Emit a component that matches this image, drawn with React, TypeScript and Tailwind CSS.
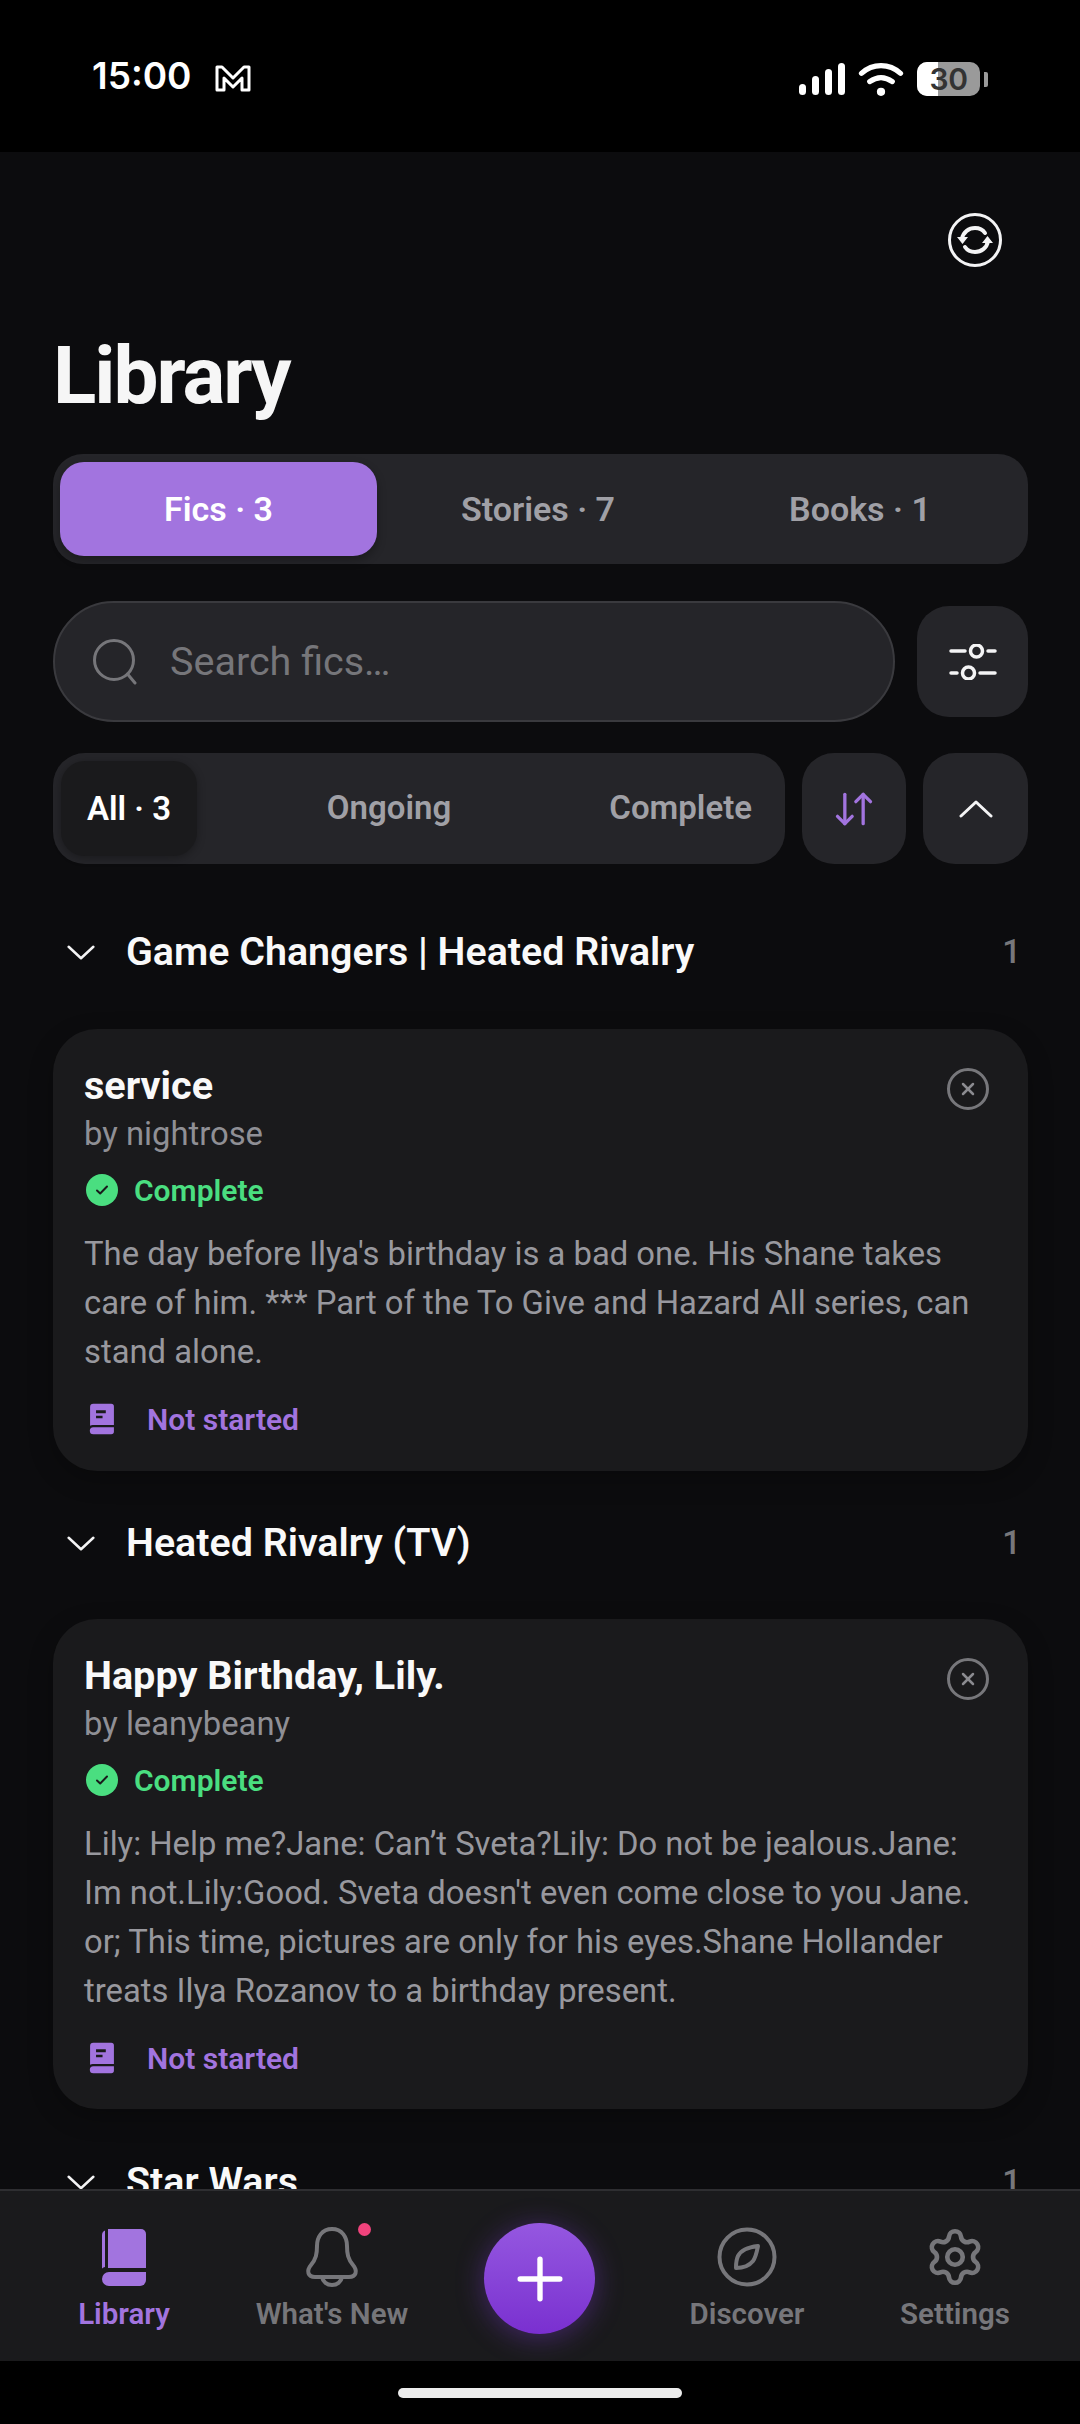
import { ArrowDownUp, Plus, Settings, X } from "lucide-react";

function BookFilled({ className }: { className: string }) {
  return (
    <svg viewBox="0 0 24 28" className={className} fill="currentColor">
      <path d="M4 0H20.500A2.500 2.500 0 0 1 23 2.500V19.500H3.500A4 4 0 0 0 1 20.300V3A3 3 0 0 1 4 0Z" />
      <path d="M4 21.500h19V25.500A2.500 2.500 0 0 1 20.500 28H4a3.250 3.250 0 0 1 0-6.500Z" />
      <path d="M6.500 6h9v2.600h-9zM6.500 11h6v2.200h-6z" fill="#1a1a1c" />
    </svg>
  );
}

function LibraryIcon() {
  return (
    <svg viewBox="0 0 44 57" className="w-[44px] h-[57px]" fill="#a274df">
      <path d="M3 1.500V38a9 9 0 0 0-3 1.500V6a5 5 0 0 1 3-4.500Z" />
      <path d="M6 0h33a5 5 0 0 1 5 5v34H6Z" />
      <path d="M7 43h37v8a6 6 0 0 1-6 6H7a7 7 0 0 1 0-14Z" />
    </svg>
  );
}

function BellIcon() {
  return (
    <svg viewBox="0 0 54 60" className="w-[54px] h-[60px]" fill="none" stroke="#76767a" strokeWidth="4" strokeLinejoin="round" strokeLinecap="round">
      <path d="M27 2c-10 0-15 8-15 17 0 8-1 13-6 19-5 6-3 12 4 12h34c7 0 9-6 4-12-5-6-6-11-6-19 0-9-5-17-15-17Z" />
      <path d="M17 50c1 5 5 8 10 8s9-3 10-8" />
    </svg>
  );
}

function CompassIcon() {
  return (
    <svg viewBox="0 0 60 60" className="w-[60px] h-[60px]" fill="none" stroke="#76767a" strokeWidth="4">
      <circle cx="30" cy="30" r="27.500" />
      <path d="M41 19c-9 1-17 4-20 10-2 4-2 8-2 12 7 0 13-2 17-7 3-4 4-10 5-15Z" strokeLinejoin="round" />
    </svg>
  );
}

function SyncIcon() {
  return (
    <svg viewBox="0 0 54 54" className="w-[54px] h-[54px]" fill="none" stroke="#f4f4f5" strokeWidth="3">
      <circle cx="27" cy="27" r="25.500" />
      <path d="M14 26c1-7 7-11 13-11 5 0 8 2 10 5" strokeLinecap="round" strokeWidth="4" />
      <path d="M40 28c-1 7-7 11-13 11-5 0-8-2-10-5" strokeLinecap="round" strokeWidth="4" />
      <path d="M9 24h11l-5.500 7zM34 30h11l-5.500-7z" fill="#f4f4f5" stroke="none" />
    </svg>
  );
}

function SlidersIcon() {
  return (
    <svg viewBox="0 0 48 36" className="w-[48px] h-[36px]" fill="none" stroke="#f4f4f5" strokeWidth="3.500" strokeLinecap="round">
      <path d="M2 7h14M39 7h7M2 29h6M31 29h15" />
      <circle cx="27.500" cy="7" r="6" />
      <circle cx="19.500" cy="29" r="6" />
    </svg>
  );
}

function ChevronThin({ up, className }: { up?: boolean; className: string }) {
  return (
    <svg viewBox="0 0 34 18" className={className} fill="none" stroke="#f4f4f5" strokeWidth="3" strokeLinecap="round" strokeLinejoin="round">
      <path d={up ? "M2 16 17 2l15 14" : "M2 2l15 14L32 2"} />
    </svg>
  );
}

function SearchThin() {
  return (
    <svg viewBox="0 0 44 46" className="w-[44px] h-[46px]" fill="none" stroke="#76767a" strokeWidth="3" strokeLinecap="round">
      <circle cx="21" cy="21" r="19.500" />
      <path d="M34.500 35 42 44" />
    </svg>
  );
}

function StatusBar() {
  return (
    <div className="h-[152px] bg-black shrink-0 flex items-start justify-between pl-[92px] pr-[92px] pt-[56px]">
      <div className="flex items-center gap-[23px]">
        <span className="font-['Inter',sans-serif] text-[37px] leading-[40px] font-semibold text-white">15:00</span>
        <svg viewBox="0 0 36 28" className="w-[36px] h-[28px] mt-[3px]" fill="none" stroke="white" strokeWidth="3" strokeLinejoin="round">
          <path d="M2 3h5l11 11L29 3h5v23h-7V14l-9 9-9-9v12H2Z" />
        </svg>
      </div>
      <div className="flex items-center gap-[13px] h-[36px] mt-[5px]">
        <svg viewBox="0 0 46 32" className="w-[46px] h-[32px]" fill="white">
          <rect x="0" y="21" width="7" height="11" rx="3.500" />
          <rect x="13" y="13" width="7" height="19" rx="3.500" />
          <rect x="26" y="6" width="7" height="26" rx="3.500" />
          <rect x="39" y="0" width="7" height="32" rx="3.500" />
        </svg>
        <svg viewBox="0 0 44 34" className="w-[46px] h-[35px]" fill="none" stroke="white" strokeWidth="5" strokeLinecap="round">
          <path d="M3 11c11-10 27-10 38 0" />
          <path d="M11 19c7-5 15-5 22 0" />
          <circle cx="22" cy="29" r="4" fill="white" stroke="none" />
        </svg>
        <div className="flex items-center gap-[4px]">
          <div className="relative w-[63px] h-[34px] rounded-[10px] overflow-hidden flex bg-[#9a9a9a]">
            <div className="w-[21px] bg-white" />
            <span className="font-['Inter',sans-serif] absolute inset-0 flex items-center justify-center text-[30px] font-semibold text-[#333] tracking-[-0.5px]">30</span>
          </div>
          <div className="w-[4px] h-[15px] bg-[#9a9a9a] rounded-r-[2px]" />
        </div>
      </div>
    </div>
  );
}

function GroupHeader({ title, count, className }: { title: string; count: number; className: string }) {
  return (
    <div className={`flex items-center justify-between pl-[14px] pr-[7px] ${className}`}>
      <div className="flex items-center gap-[31px]">
        <ChevronThin className="w-[28px] h-[15px]" />
        <span className="text-[39.400px] leading-[46px] font-semibold text-[#f9f9f9]">{title}</span>
      </div>
      <span className="text-[33px] font-medium text-[#77777b]">{count}</span>
    </div>
  );
}

function FicCard({ title, author, lines, heightClass }: { title: string; author: string; lines: string[]; heightClass: string }) {
  return (
    <div className={`bg-[#1a1a1c] rounded-[44px] pl-[31px] pr-[30px] pt-[35px] shadow-[0_8px_24px_rgba(0,0,0,0.25)] ${heightClass}`}>
      <div className="flex items-start justify-between">
        <div className="text-[39.600px] leading-[44px] font-bold text-[#f9f9f9]">{title}</div>
        <div className="w-[42px] h-[42px] mr-[9px] mt-[4px] rounded-full border-[3px] border-[#77777b] flex items-center justify-center">
          <X size={20} strokeWidth={3} color="#8b8b90" />
        </div>
      </div>
      <div className="text-[32.800px] leading-[40px] text-[#8f8f95] mt-[4px]">{author}</div>
      <div className="flex items-center gap-[16px] mt-[16px] h-[40px] pl-[2px]">
        <div className="w-[32px] h-[32px] rounded-full bg-[#4ade80] flex items-center justify-center">
          <svg viewBox="0 0 16 16" className="w-[16px] h-[16px]" fill="none" stroke="#1a1a1c" strokeWidth="2" strokeLinecap="round" strokeLinejoin="round">
            <path d="M3 8.500l3.200 3L13 4.500" />
          </svg>
        </div>
        <span className="text-[30px] font-semibold text-[#4ade80]">Complete</span>
      </div>
      <div className="mt-[20px] text-[32.800px] leading-[49px] text-[#98989e]">
        {lines.map((l) => (
          <div key={l} className="whitespace-nowrap">{l}</div>
        ))}
      </div>
      <div className="flex items-center gap-[32px] mt-[22px] pl-[5px] h-[40px]">
        <BookFilled className="w-[26px] h-[34px] text-[#a274df]" />
        <span className="text-[30px] font-semibold text-[#a274df]">Not started</span>
      </div>
    </div>
  );
}

function NavItem({ label, active, children }: { label: string; active?: boolean; children: React.ReactNode }) {
  return (
    <div className="flex flex-col items-center w-[208px]">
      <div className="h-[60px] flex items-center justify-center">{children}</div>
      <span className={`text-[29.500px] leading-[36px] mt-[9px] font-semibold whitespace-nowrap ${active ? "text-[#a274df]" : "text-[#76767a]"}`}>{label}</span>
    </div>
  );
}

export default function App() {
  return (
    <div className="w-[1080px] h-[2424px] flex flex-col overflow-hidden bg-black font-['Roboto',sans-serif]">
      <StatusBar />
      <main className="h-[2037px] shrink-0 overflow-hidden bg-[#0c0c0e] pl-[53px] pr-[52px]">
        <div className="flex justify-end pt-[61px] pr-[26px]">
          <SyncIcon />
        </div>
        <h1 className="text-[80px] leading-[92px] font-bold text-[#f6f6f6] tracking-[-2px] mt-[63px]">Library</h1>
        <div className="h-[110px] mt-[32px] bg-[#252529] rounded-[30px] p-[7px] flex items-center text-[34px] font-semibold text-[#a0a0a6]">
          <div className="w-[317px] h-[94px] rounded-[24px] bg-[#a274df] text-white flex items-center justify-center shadow-[0_4px_10px_rgba(0,0,0,0.3)]">Fics · 3</div>
          <div className="flex-1 text-center">Stories · 7</div>
          <div className="flex-1 text-center">Books · 1</div>
        </div>
        <div className="flex items-center gap-[22px] mt-[37px]">
          <div className="flex-1 h-[121px] rounded-full bg-[#252529] border-2 border-[#3a3a3e] flex items-center pl-[38px] gap-[33px]">
            <SearchThin />
            <span className="text-[39.500px] text-[#76767a]">Search fics…</span>
          </div>
          <div className="w-[111px] h-[111px] rounded-[32px] bg-[#252529] flex items-center justify-center">
            <SlidersIcon />
          </div>
        </div>
        <div className="flex items-center gap-[17px] mt-[31px]">
          <div className="flex-1 h-[111px] rounded-[32px] bg-[#252529] p-[8px] pb-[10px] flex items-center text-[33px] font-semibold text-[#a0a0a6]">
            <div className="w-[136px] h-[95px] mb-[-2px] rounded-[24px] bg-[#1a1a1c] text-white flex items-center justify-center shadow-[0_2px_8px_rgba(0,0,0,0.3)]">All · 3</div>
            <div className="w-[272px] ml-[56px] text-center">Ongoing</div>
            <div className="flex-1 text-right pr-[25px]">Complete</div>
          </div>
          <div className="w-[104px] h-[111px] rounded-[32px] bg-[#252529] flex items-center justify-center">
            <ArrowDownUp size={44} strokeWidth={1.8} color="#a274df" />
          </div>
          <div className="w-[105px] h-[111px] rounded-[32px] bg-[#252529] flex items-center justify-center">
            <ChevronThin up className="w-[34px] h-[18px]" />
          </div>
        </div>
        <GroupHeader title="Game Changers | Heated Rivalry" count={1} className="h-[46px] mt-[65px]" />
        <div className="mt-[54px]">
          <FicCard
            title="service"
            author="by nightrose"
            heightClass="h-[442px]"
            lines={[
              "The day before Ilya's birthday is a bad one. His Shane takes",
              "care of him. *** Part of the To Give and Hazard All series, can",
              "stand alone.",
            ]}
          />
        </div>
        <GroupHeader title="Heated Rivalry (TV)" count={1} className="h-[46px] mt-[49px]" />
        <div className="mt-[53px]">
          <FicCard
            title="Happy Birthday, Lily."
            author="by leanybeany"
            heightClass="h-[490px]"
            lines={[
              "Lily: Help me?Jane: Can’t Sveta?Lily: Do not be jealous.Jane:",
              "Im not.Lily:Good. Sveta doesn't even come close to you Jane.",
              "or; This time, pictures are only for his eyes.Shane Hollander",
              "treats Ilya Rozanov to a birthday present.",
            ]}
          />
        </div>
        <GroupHeader title="Star Wars" count={1} className="h-[46px] mt-[50px]" />
      </main>
      <nav className="h-[172px] shrink-0 bg-[#1a1a1c] border-t-2 border-[#2e2e31] flex items-start pl-[20px] pt-[36px]">
        <NavItem label="Library" active>
          <LibraryIcon />
        </NavItem>
        <NavItem label="What's New">
          <div className="relative">
            <BellIcon />
            <div className="absolute top-[-4px] right-[-12px] w-[13px] h-[13px] rounded-full bg-[#f0437c]" />
          </div>
        </NavItem>
        <div className="w-[111px] h-[111px] ml-[48px] mr-[48px] mt-[-4px] shrink-0 rounded-full bg-gradient-to-b from-[#9557e0] to-[#7a2fd0] flex items-center justify-center shadow-[0_4px_28px_rgba(130,60,220,0.4)]">
          <Plus size={68} strokeWidth={1.9} color="white" />
        </div>
        <NavItem label="Discover">
          <CompassIcon />
        </NavItem>
        <NavItem label="Settings">
          <Settings size={62} strokeWidth={1.8} color="#76767a" />
        </NavItem>
      </nav>
      <div className="h-[63px] shrink-0 bg-black flex justify-center pt-[27px]">
        <div className="w-[284px] h-[10px] rounded-full bg-[#ececec]" />
      </div>
    </div>
  );
}
